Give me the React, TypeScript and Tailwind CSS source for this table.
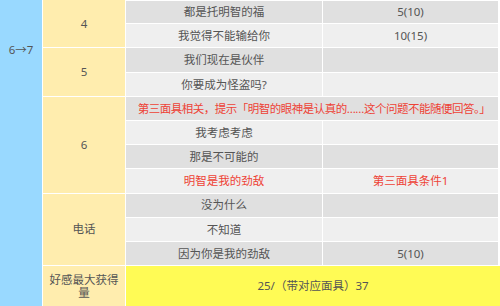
import React from "react";

type Row = { a: string; b?: string; red?: boolean; span?: boolean };

const rows: Row[] = [
  { a: "都是托明智的福", b: "5(10)" },
  { a: "我觉得不能输给你", b: "10(15)" },
  { a: "我们现在是伙伴" },
  { a: "你要成为怪盗吗?" },
  { a: "第三面具相关，提示「明智的眼神是认真的……这个问题不能随便回答。」", red: true, span: true },
  { a: "我考虑考虑" },
  { a: "那是不可能的" },
  { a: "明智是我的劲敌", b: "第三面具条件1", red: true },
  { a: "没为什么" },
  { a: "不知道" },
  { a: "因为你是我的劲敌", b: "5(10)" },
];

// yellow group labels: [label, start row, span]
const groups: [string, number, number][] = [
  ["4", 1, 2],
  ["5", 3, 2],
  ["6", 5, 4],
  ["电话", 9, 3],
];

const rowStart = [
  "row-start-1", "row-start-2", "row-start-3", "row-start-4", "row-start-5", "row-start-6",
  "row-start-7", "row-start-8", "row-start-9", "row-start-10", "row-start-11", "row-start-12",
];
const rowSpan = ["", "row-span-1", "row-span-2", "row-span-3", "row-span-4"];

export default function App() {
  return (
    <div
      className="w-[500px] h-[306px] overflow-hidden bg-white text-[11.5px] text-[#555]"
      style={{ fontFamily: '"Noto Sans", "Noto Sans CJK SC", sans-serif' }}
    >
      <div className="grid grid-cols-[42px_82px_196px_175px_1px] grid-rows-[repeat(11,23.2px)_40px] gap-px bg-white">
        {/* stage column */}
        <div className="col-start-1 row-start-1 row-span-12 bg-[#99d9ff] flex justify-center pt-[42px] leading-[16px]">
          6→7
        </div>

        {groups.map(([label, start, span]) => (
          <div
            key={label}
            className={`col-start-2 ${rowStart[start - 1]} ${rowSpan[span]} bg-[#ffedae] flex items-center justify-center leading-[14px]`}
          >
            {label}
          </div>
        ))}

        {rows.map((r, i) => {
          const bg = i % 2 === 0 ? "bg-[#e0e0e0]" : "bg-[#efefef]";
          const color = r.red ? "text-[#ee4236]" : "";
          return r.span ? (
            <div
              key={i}
              className={`col-start-3 col-span-2 ${rowStart[i]} ${bg} ${color} flex items-center justify-center whitespace-nowrap tracking-[-0.5px] pl-[4px]`}
            >
              {r.a}
            </div>
          ) : (
            <React.Fragment key={i}>
              <div className={`col-start-3 ${rowStart[i]} ${bg} ${color} flex items-center justify-center whitespace-nowrap ${i === 0 ? "border-t border-white" : ""}`}>
                {r.a}
              </div>
              <div className={`col-start-4 ${rowStart[i]} ${bg} ${color} flex items-center justify-center whitespace-nowrap ${i === 0 ? "border-t border-white" : ""}`}>
                {r.b ?? ""}
              </div>
            </React.Fragment>
          );
        })}

        {/* summary */}
        <div className="col-start-2 row-start-12 bg-[#ffedae] flex items-center justify-center text-center px-[4px] leading-[13px]">
          好感最大获得量
        </div>
        <div className="col-start-3 col-span-3 row-start-12 bg-[#fffb55] flex items-center justify-center">
          25/（带对应面具）37
        </div>
      </div>
    </div>
  );
}
